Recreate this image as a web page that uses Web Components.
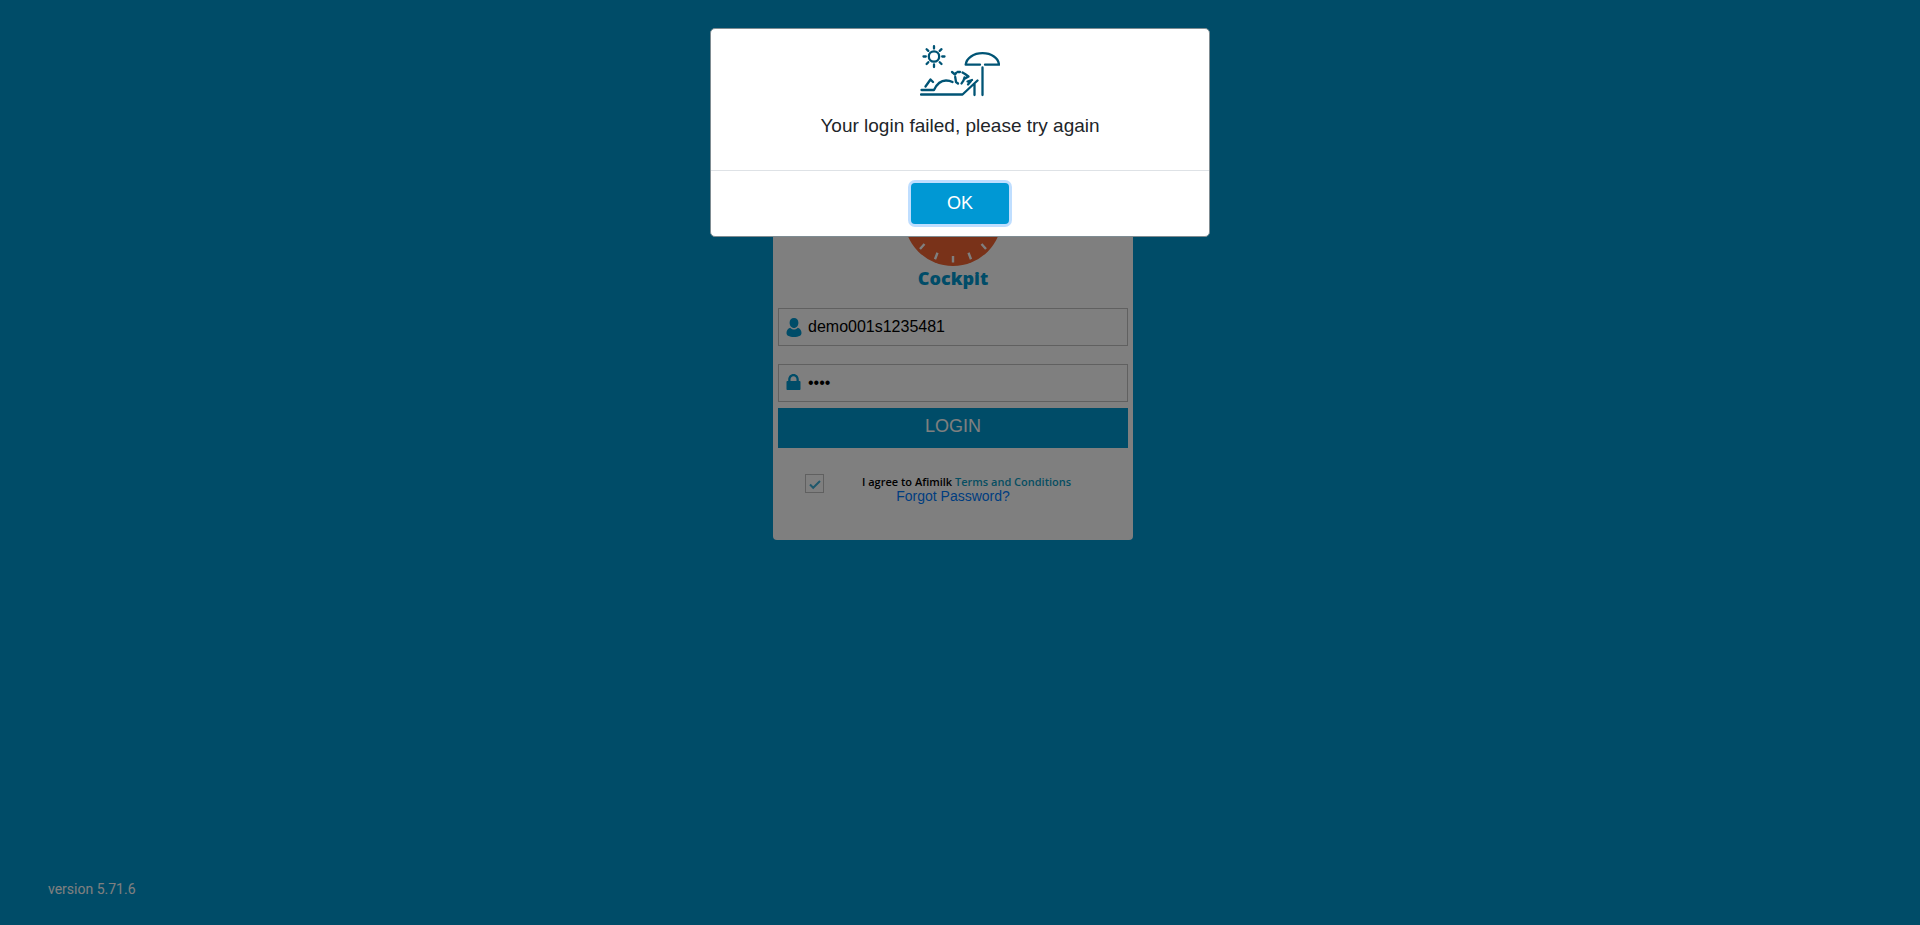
<!DOCTYPE html>
<html lang="en">
<head>
<meta charset="utf-8">
<title>Cockpit login</title>
<style>
  html, body { margin: 0; height: 100%; }
  body { font: 16px/24px "Liberation Sans", Arial, sans-serif; color: #212529; }
</style>
</head>
<body>
<login-page>
  <login-card>
    <cockpit-logo slot="logo"></cockpit-logo>
    <login-field icon="user" type="text" name="user" label="User name" value="demo001s1235481"></login-field>
    <login-field icon="lock" type="password" name="password" label="Password" value="1234"></login-field>
  </login-card>
  <span slot="version">version 5.71.6</span>
</login-page>
<message-dialog>Your login failed, please try again</message-dialog>

<script>
class ShadowElement extends HTMLElement {
  constructor() {
    super();
    this.attachShadow({ mode: 'open' });
  }
  connectedCallback() {
    this.shadowRoot.innerHTML = this.render();
  }
}

customElements.define('login-page', class extends ShadowElement {
  render() {
    return `
      <style>
        :host { display: flex; flex-direction: column; box-sizing: border-box; min-height: 100vh;
                padding: 152px 14px 18px 0; background: #0098d0; }
        main { display: flex; justify-content: center; }
        footer { margin-top: auto; padding: 0 48px; font: 400 14px/36px Roboto, sans-serif; color: #fff; }
      </style>
      <main><slot></slot></main>
      <footer><slot name="version"></slot></footer>`;
  }
});

customElements.define('cockpit-logo', class extends ShadowElement {
  render() {
    return `
      <style>
        :host { display: flex; flex-direction: column; align-items: center; }
        svg { display: block; width: 98px; height: 98px; }
        span { font: 800 18px/24px "Open Sans", sans-serif; color: #0098d0; }
      </style>
      <svg viewBox="-49 -49 98 98" aria-hidden="true">
        <circle r="49" fill="#f26432"/>
        <g stroke="#fff" stroke-width="2.4">
          <path d="M0 39V45.500M-15.500 35.800-18 42.200M15.500 35.800 18 42.200M-28.500 27-33 32M28.500 27 33 32M-36 15-42 17.500M36 15 42 17.500M-39 0H-45.500M39 0H45.500"/>
          <path d="M0 6-22-20" stroke-width="4"/>
        </g>
      </svg>
      <span>Cockpit</span>`;
  }
});

customElements.define('login-field', class extends ShadowElement {
  render() {
    const icons = {
      user: '<path d="M8 0c2.700 0 4.400 1.900 4.400 4.700S10.600 10 8 10 3.600 7.500 3.600 4.700 5.300 0 8 0zM4.200 9.800C5.200 10.900 6.500 11.600 8 11.600s2.800-.7 3.800-1.800c2.400.7 3.700 2.600 3.700 5.200 0 1.200-.4 2.200-1.500 2.700-1.700.9-3.800 1.300-6 1.300s-4.300-.4-6-1.300C.9 17.200.5 16.200.5 15c0-2.600 1.300-4.500 3.700-5.200z"/>',
      lock: '<path fill-rule="evenodd" d="M2.200 7V5.800C2.200 2.400 4.400 0 7.500 0s5.300 2.400 5.300 5.800V7h.7c.6 0 1 .4 1 1v7c0 .6-.4 1-1 1h-12c-.6 0-1-.4-1-1V8c0-.6.4-1 1-1zM4.500 7h6V5.600c0-2-1.200-3.300-3-3.300s-3 1.300-3 3.300z"/>'
    };
    const a = n => this.getAttribute(n);
    return `
      <style>
        :host { display: block; }
        label { display: flex; align-items: center; gap: 6px; box-sizing: border-box; height: 38px;
                padding: 0 7px; border: 1px solid #c0c0c0; }
        svg { flex: none; width: 16px; height: 19px; fill: #0098d0; }
        input { flex: 1; min-width: 0; padding: 0; border: 0; outline: 0; background: none;
                font: 16px/24px "Liberation Sans", Arial, sans-serif; color: #000; }
      </style>
      <label>
        <svg viewBox="0 0 16 19" aria-hidden="true">${icons[a('icon')]}</svg>
        <input type="${a('type')}" name="${a('name')}" aria-label="${a('label')}" value="${a('value')}">
      </label>`;
  }
});

customElements.define('login-card', class extends ShadowElement {
  render() {
    return `
      <style>
        :host { display: block; box-sizing: border-box; width: 360px; max-width: 100%;
                padding: 16px 5px 36px; border-radius: 4px; background: #fff; }
        .fields { display: flex; flex-direction: column; gap: 18px; margin-top: 18px; }
        .login { display: block; width: 100%; height: 40px; margin-top: 6px; padding: 0 0 4px; border: 0;
                 background: #0098d0; color: #fff; font: 18px/24px "Liberation Sans", Arial, sans-serif; }
        .terms { display: flex; align-items: flex-start; height: 15px; margin-top: 26px; padding-left: 27px; }
        input { appearance: none; flex: none; box-sizing: border-box; width: 19px; height: 19px; margin: 0;
                border: 1px solid #c0c0c0;
                background: url("data:image/svg+xml,%3Csvg xmlns='http://www.w3.org/2000/svg' viewBox='0 0 17 17'%3E%3Cpath d='M4 9.500 7.200 12.800 14 6' fill='none' stroke='%2340b0d8' stroke-width='2'/%3E%3C/svg%3E"); }
        label { margin-left: 38px; font: 600 11px/15px "Open Sans", sans-serif; color: #000; }
        a { color: #0c9cc4; text-decoration: none; }
        .forgot { display: block; font-size: 14px; line-height: 15px; text-align: center; color: #007bff; }
      </style>
      <slot name="logo"></slot>
      <div class="fields"><slot></slot></div>
      <button class="login" type="button">LOGIN</button>
      <div class="terms">
        <input type="checkbox" id="agree" checked>
        <label for="agree">I agree to Afimilk <a href="#terms">Terms and Conditions</a></label>
      </div>
      <a class="forgot" href="#forgot">Forgot Password?</a>`;
  }
});

customElements.define('message-dialog', class extends ShadowElement {
  render() {
    return `
      <style>
        :host { position: fixed; inset: 0; display: flex; justify-content: center; align-items: flex-start;
                padding: 28px 16px; background: rgba(0, 0, 0, .5); }
        section { box-sizing: border-box; width: 500px; max-width: 100%; border: 1px solid #7f8c92;
                  border-radius: 5px; background: #fff; }
        .body { display: flex; flex-direction: column; align-items: center; gap: 15px; padding: 16px 16px 30px; }
        svg { width: 80px; height: 52px; }
        p { margin: 0; font-size: 19px; line-height: 28px; }
        footer { display: flex; justify-content: center; padding: 12px; border-top: 1px solid #dee2e6; }
        button { width: 98px; height: 41px; padding: 0 0 2px; border: 0; border-radius: 4px; background: #0098d4;
                 color: #fff; font: 18px/24px "Liberation Sans", Arial, sans-serif;
                 box-shadow: 0 0 0 3px #bfdeff; outline: 0; }
      </style>
      <section role="dialog" aria-modal="true" aria-labelledby="message">
        <div class="body">
          <svg viewBox="0 0 80 52" fill="none" stroke="#005475" stroke-width="2.3" stroke-linecap="round" stroke-linejoin="round" aria-hidden="true">
            <circle cx="14" cy="11.500" r="5.200"/>
            <path d="M14 1.200V3.500M14 19.500V22M3.500 11.500H5.800M22.200 11.500h2.300M6.600 4.200 8.300 5.900M19.700 17.200l1.800 1.800M21.500 4.200l-1.800 1.700M8.300 17.200l-1.700 1.800"/>
            <path d="M60 19.700H45.700C46.500 13 53.500 8.200 62.500 8.200S78.500 13 79 19.700H65M62.500 22.500V50"/>
            <path d="M1 49.500H42.500L57.500 35.500M1.500 45H14C17 38.500 21 35.500 26 35.500c3 0 5 .7 6.500 1.500M5.500 41.500 10.500 34.500 13 37M54.500 39V50"/>
            <path d="M32 27l3 2.500 1-1.500M37.500 27H40M35.200 32l.8 5 2 1.500M42.500 27.500l2.500 1.500 3.500 2.500-3.500 2M44.500 32.500c-.5 2.500-1.500 4.500-3 6M52 35l-4.500 1.500M51 36l-3 3.500"/>
          </svg>
          <p id="message"><slot></slot></p>
        </div>
        <footer><button type="button">OK</button></footer>
      </section>`;
  }
});
</script>
</body>
</html>
